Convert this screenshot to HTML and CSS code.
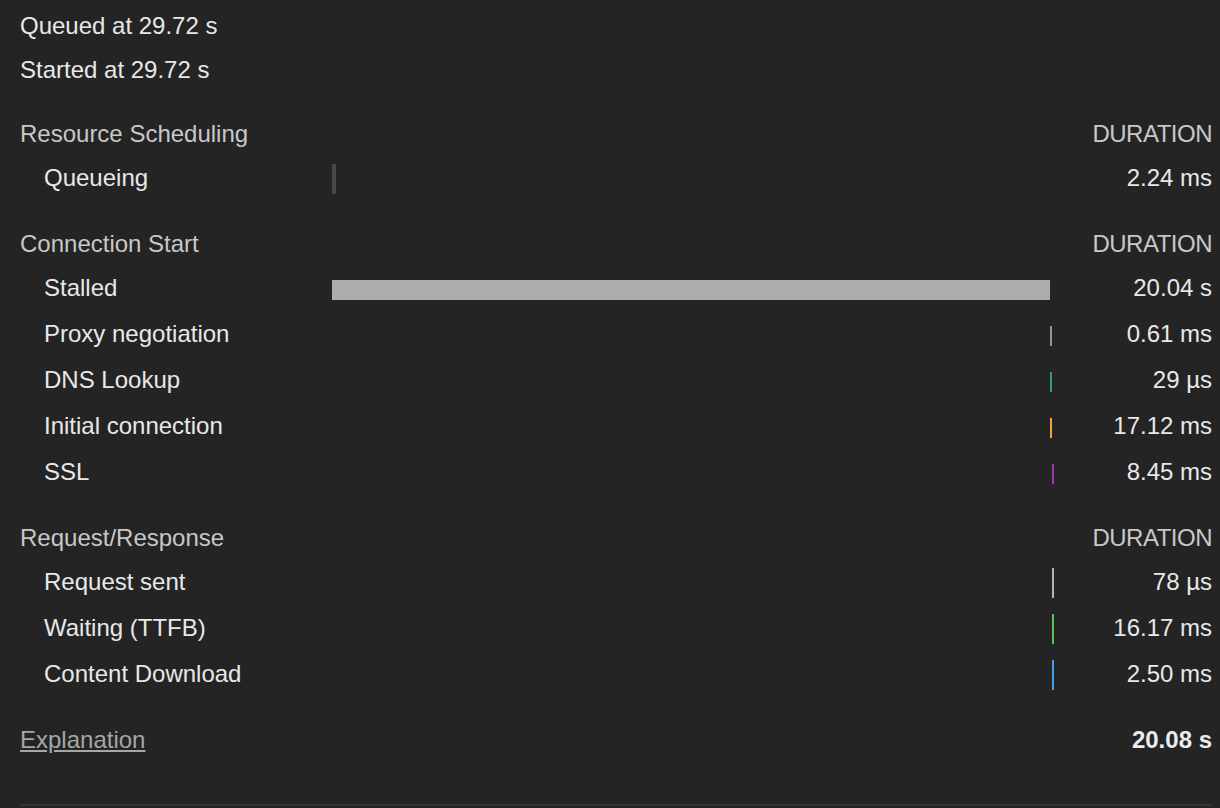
FILE: index.html
```html
<!DOCTYPE html>
<html lang="en">
<head>
<meta charset="utf-8">
<title>Timing</title>
<link rel="stylesheet" href="styles.css">
</head>
<body>
<div class="panel">
  <div class="meta">Queued at 29.72 s</div>
  <div class="meta">Started at 29.72 s</div>

  <div class="section">
    <div class="row head"><span class="name">Resource Scheduling</span><span class="track"></span><span class="dur">DURATION</span></div>
    <div class="row"><span class="name sub">Queueing</span><span class="track tall"><i class="bar queue" style="margin-left:0px;width:4px"></i></span><span class="value">2.24 ms</span></div>
  </div>

  <div class="section">
    <div class="row head"><span class="name">Connection Start</span><span class="track"></span><span class="dur">DURATION</span></div>
    <div class="row"><span class="name sub">Stalled</span><span class="track"><i class="bar stalled" style="margin-left:0px;width:718px"></i></span><span class="value">20.04 s</span></div>
    <div class="row"><span class="name sub">Proxy negotiation</span><span class="track"><i class="bar proxy" style="margin-left:718px;width:2px"></i></span><span class="value">0.61 ms</span></div>
    <div class="row"><span class="name sub">DNS Lookup</span><span class="track"><i class="bar dns" style="margin-left:718px;width:2px"></i></span><span class="value">29 µs</span></div>
    <div class="row"><span class="name sub">Initial connection</span><span class="track"><i class="bar conn" style="margin-left:718px;width:2px"></i></span><span class="value">17.12 ms</span></div>
    <div class="row"><span class="name sub">SSL</span><span class="track"><i class="bar ssl" style="margin-left:720px;width:2px"></i></span><span class="value">8.45 ms</span></div>
  </div>

  <div class="section">
    <div class="row head"><span class="name">Request/Response</span><span class="track"></span><span class="dur">DURATION</span></div>
    <div class="row"><span class="name sub">Request sent</span><span class="track tall"><i class="bar sent" style="margin-left:720px;width:2px"></i></span><span class="value">78 µs</span></div>
    <div class="row"><span class="name sub">Waiting (TTFB)</span><span class="track tall"><i class="bar wait" style="margin-left:720px;width:2px"></i></span><span class="value">16.17 ms</span></div>
    <div class="row"><span class="name sub">Content Download</span><span class="track tall"><i class="bar down" style="margin-left:720px;width:2px"></i></span><span class="value">2.50 ms</span></div>
  </div>

  <div class="section">
    <div class="row head"><a class="explain" href="#">Explanation</a><span class="track"></span><span class="total">20.08 s</span></div>
  </div>
  <div class="rule"></div>
</div>
</body>
</html>
```

FILE: styles.css
```css
html, body {
  margin: 0;
  padding: 0;
  background: #242424;
}

body {
  font-family: "Liberation Sans", Arial, sans-serif;
  font-size: 24px;
  color: #e8e8e8;
  width: 1220px;
  height: 808px;
  overflow: hidden;
}

.panel {
  padding: 4px 8px 0 20px;
}

.meta {
  height: 44px;
  line-height: 44px;
  white-space: nowrap;
}

.section {
  margin-top: 20px;
}

.row {
  display: grid;
  grid-template-columns: 312px 722px 158px;
  align-items: center;
  height: 46px;
  line-height: 44px;
}

.row > .name,
.row > .value {
  align-self: start;
}

.row.head {
  height: 44px;
  line-height: 44px;
}

.name {
  white-space: nowrap;
}

.head .name {
  color: #c8c8c8;
}

.name.sub {
  padding-left: 24px;
}

.track {
  display: flex;
  align-items: center;
  height: 20px;
  margin-top: 2px;
}

.head .track {
  margin-top: 0;
}

.track.tall {
  height: 30px;
  margin-top: 0;
}

.bar {
  display: block;
  height: 100%;
  flex: none;
}

.queue { background: #474747; }
.stalled { background: #acacac; }
.proxy { background: #a38d86; }
.dns { background: #2f9a8c; }
.conn { background: #f5a33a; }
.ssl { background: #9c37b0; }
.sent { background: #b4b4b4; }
.wait { background: #58c15a; }
.down { background: #3e9cea; }

.dur, .value, .total {
  text-align: right;
  white-space: nowrap;
}

.dur {
  color: #c8c8c8;
  letter-spacing: -0.5px;
}

.total {
  font-weight: bold;
  color: #ececec;
}

.explain {
  color: #a6a6a6;
  text-decoration: underline;
  justify-self: start;
}

.rule {
  margin-top: 42px;
  height: 2px;
  background: #363636;
}
```
